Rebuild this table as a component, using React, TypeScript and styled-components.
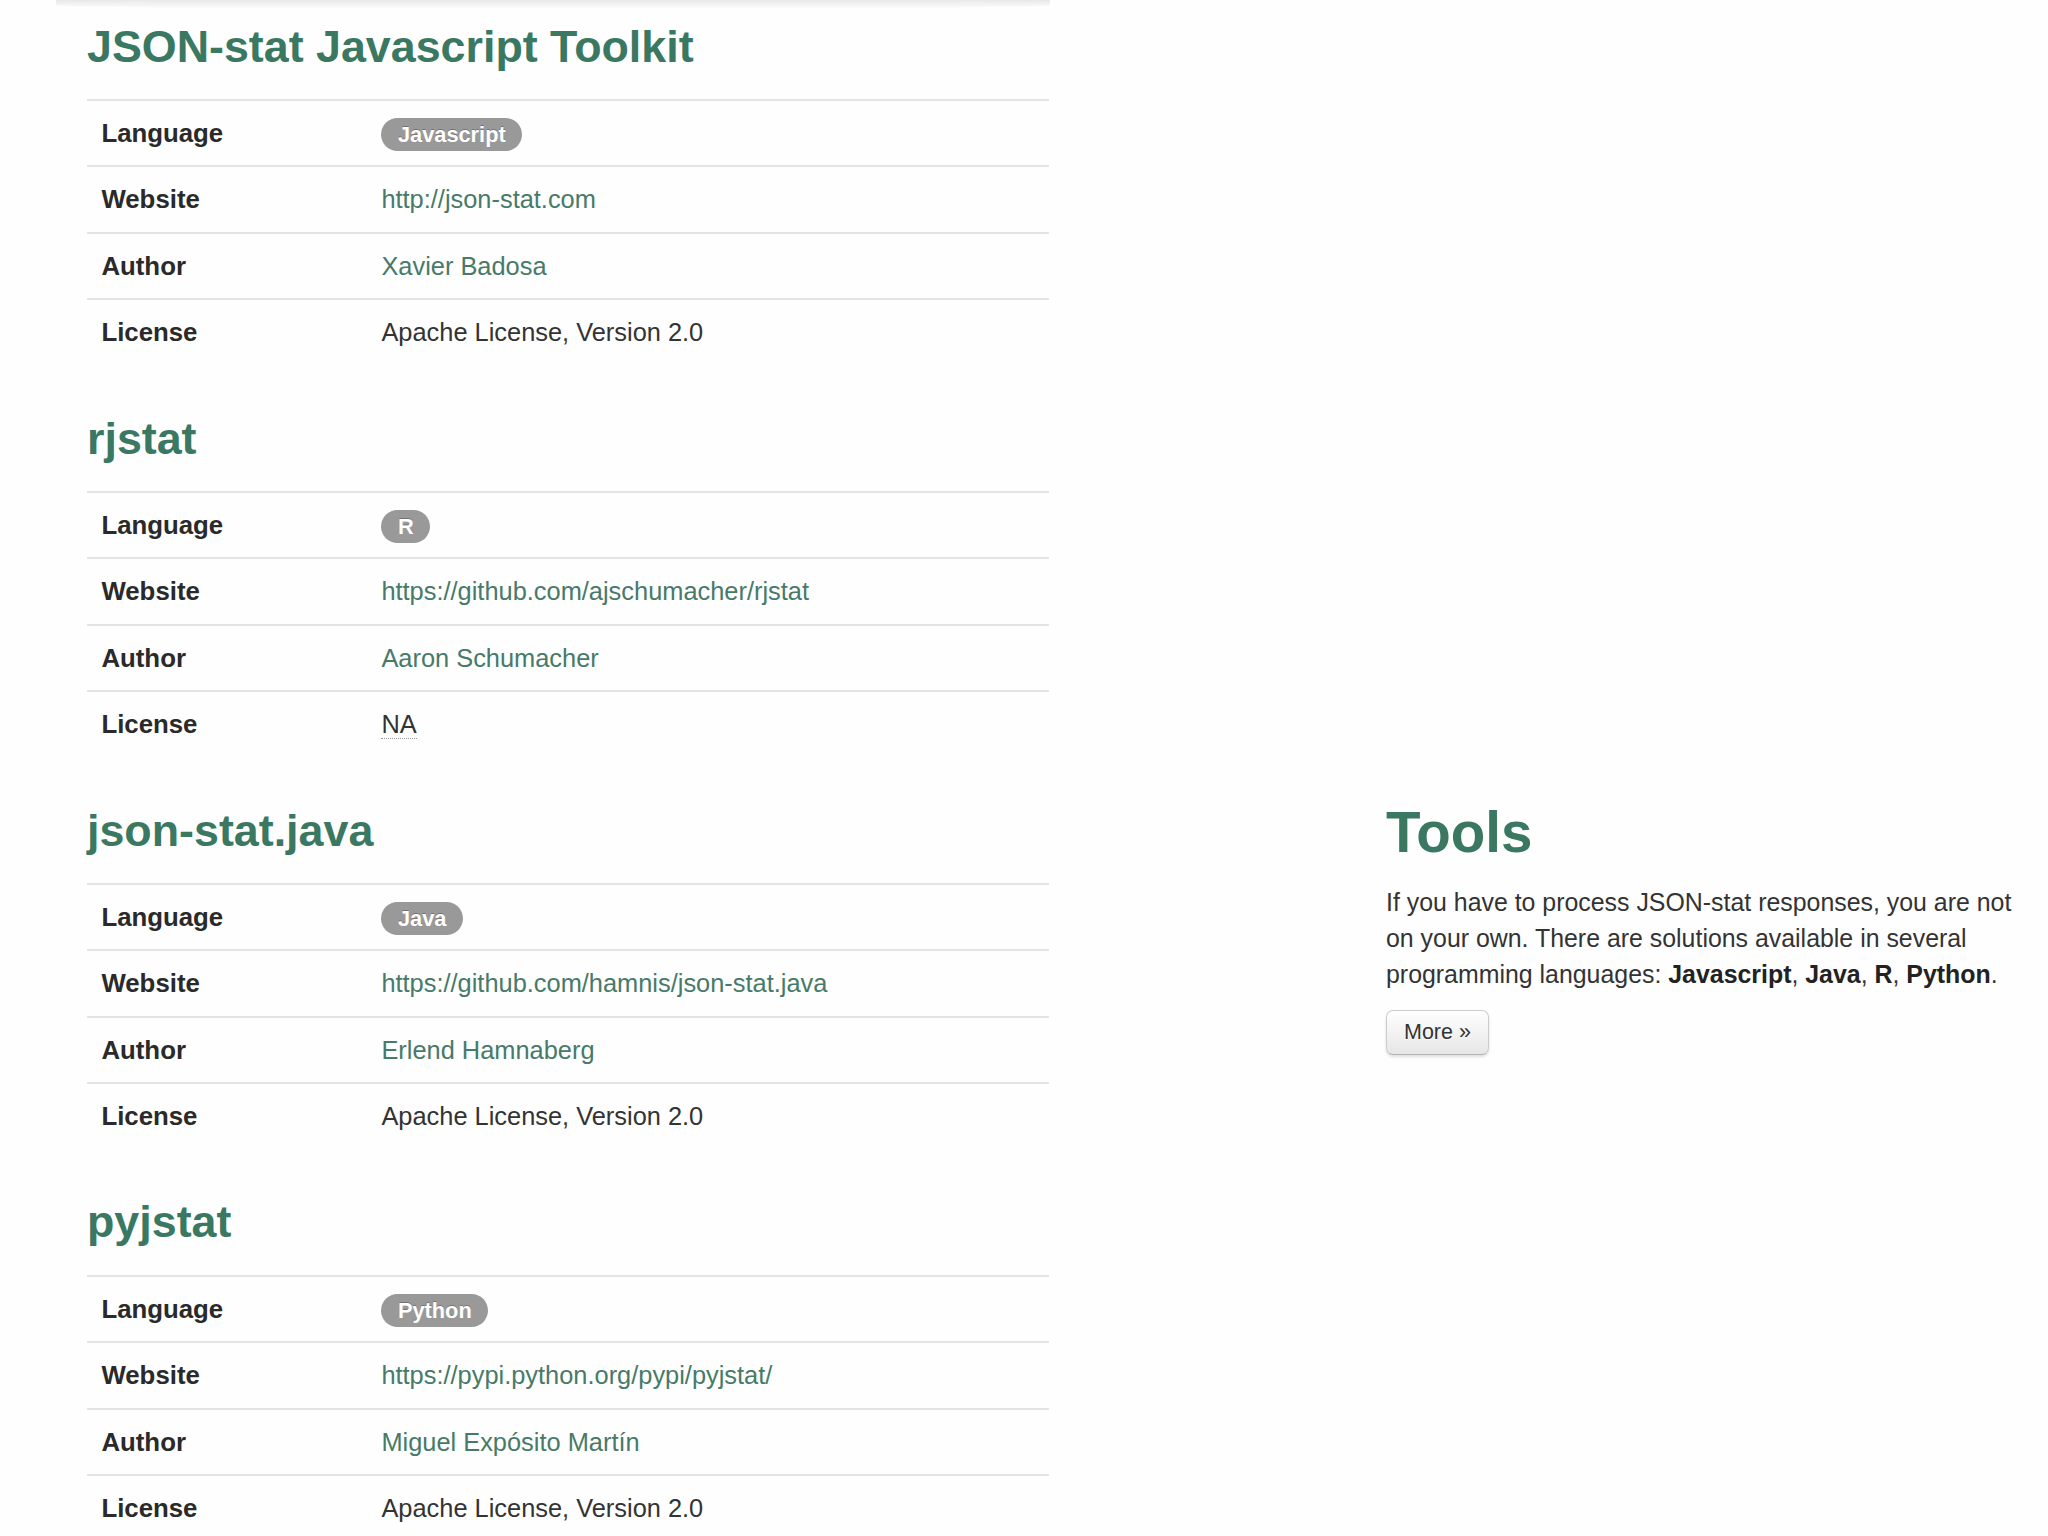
import React from "react";
import styled, { createGlobalStyle } from "styled-components";

const GlobalStyle = createGlobalStyle`
  html, body {
    margin: 0;
    padding: 0;
    background: #fefefe;
  }
  body {
    font-family: "Liberation Sans", Arial, Helvetica, sans-serif;
    color: #333;
    overflow: hidden;
  }
`;

const Page = styled.div`
  display: flex;
  align-items: flex-start;
  width: 2048px;
  height: 1536px;
  overflow: hidden;
`;

const MainColumn = styled.div`
  position: relative;
  box-sizing: border-box;
  width: 994px;
  margin-left: 56px;
  padding: 9.6px 0 0 31px;
`;

const TopShade = styled.div`
  position: absolute;
  left: 0;
  right: 0;
  top: 0;
  height: 9px;
  background: linear-gradient(to bottom, rgba(0, 0, 0, 0.085), rgba(0, 0, 0, 0));
  border-radius: 0 0 50% 50% / 0 0 4px 4px;
`;

const Section = styled.section`
  margin-bottom: 37px;
`;

const ToolTitle = styled.h3`
  margin: 0 0 17.4px;
  font-size: 44.8px;
  line-height: 72px;
  font-weight: bold;
  color: #3a7862;
`;

const Table = styled.div`
  width: 962px;
`;

const Row = styled.div`
  display: grid;
  grid-template-columns: 280px 1fr;
  border-top: 2px solid #e4e4e6;
  height: 66.4px;
  box-sizing: border-box;
`;

const Label = styled.div`
  padding: 0 14.4px;
  line-height: 64.4px;
  font-size: 25.8px;
  font-weight: bold;
  color: #2a2a2a;
  white-space: nowrap;
`;

const Value = styled.div`
  padding: 0 14.4px;
  line-height: 64.4px;
  font-size: 25.4px;
  color: #333;
  white-space: nowrap;
`;

const Link = styled.a`
  color: #477a69;
  text-decoration: none;
`;

const Badge = styled.span`
  display: inline-block;
  padding: 3.6px 16.5px;
  font-size: 21.8px;
  line-height: 25.2px;
  font-weight: bold;
  color: #fff;
  background: #999;
  border-radius: 17px;
  vertical-align: baseline;
  text-shadow: 0 -1px 0 rgba(0, 0, 0, 0.25);
`;

const Abbr = styled.abbr`
  text-decoration: none;
  border-bottom: 1px dotted #999;
  cursor: help;
`;

const SideColumn = styled.aside`
  width: 648px;
  margin-left: 336px;
  padding-top: 797px;
`;

const SideTitle = styled.h2`
  margin: 0 0 15px;
  font-size: 56.5px;
  line-height: 71.8px;
  font-weight: bold;
  color: #3a7862;
`;

const Paragraph = styled.p`
  margin: 0 0 18px;
  font-size: 24.9px;
  line-height: 36px;
  color: #333;
`;

const Strong = styled.strong`
  color: #222;
`;

const MoreButton = styled.button`
  box-sizing: border-box;
  height: 45px;
  padding: 0 17px;
  font-family: "Liberation Sans", Arial, sans-serif;
  font-size: 21.5px;
  line-height: 32px;
  color: #333;
  text-shadow: 0 1px 1px rgba(255, 255, 255, 0.75);
  background: linear-gradient(to bottom, #ffffff, #e6e6e6);
  border: 1px solid #cccccc;
  border-bottom-color: #b3b3b3;
  border-radius: 7px;
  box-shadow: inset 0 1px 0 rgba(255, 255, 255, 0.2), 0 2px 3px rgba(0, 0, 0, 0.12);
  cursor: pointer;
`;

type Tool = {
  name: string;
  language: string;
  website: string;
  author: string;
  license: string;
  licenseAbbr?: string;
};

const tools: Tool[] = [
  {
    name: "JSON-stat Javascript Toolkit",
    language: "Javascript",
    website: "http://json-stat.com",
    author: "Xavier Badosa",
    license: "Apache License, Version 2.0",
  },
  {
    name: "rjstat",
    language: "R",
    website: "https://github.com/ajschumacher/rjstat",
    author: "Aaron Schumacher",
    license: "NA",
    licenseAbbr: "Not available",
  },
  {
    name: "json-stat.java",
    language: "Java",
    website: "https://github.com/hamnis/json-stat.java",
    author: "Erlend Hamnaberg",
    license: "Apache License, Version 2.0",
  },
  {
    name: "pyjstat",
    language: "Python",
    website: "https://pypi.python.org/pypi/pyjstat/",
    author: "Miguel Expósito Martín",
    license: "Apache License, Version 2.0",
  },
];

function ToolSection({ tool }: { tool: Tool }) {
  return (
    <Section>
      <ToolTitle>{tool.name}</ToolTitle>
      <Table>
        <Row>
          <Label>Language</Label>
          <Value>
            <Badge>{tool.language}</Badge>
          </Value>
        </Row>
        <Row>
          <Label>Website</Label>
          <Value>
            <Link href={tool.website}>{tool.website}</Link>
          </Value>
        </Row>
        <Row>
          <Label>Author</Label>
          <Value>
            <Link href="#">{tool.author}</Link>
          </Value>
        </Row>
        <Row>
          <Label>License</Label>
          <Value>
            {tool.licenseAbbr ? (
              <Abbr title={tool.licenseAbbr}>{tool.license}</Abbr>
            ) : (
              tool.license
            )}
          </Value>
        </Row>
      </Table>
    </Section>
  );
}

export default function App() {
  return (
    <>
      <GlobalStyle />
      <Page>
        <MainColumn>
          <TopShade />
          {tools.map((t) => (
            <ToolSection key={t.name} tool={t} />
          ))}
        </MainColumn>
        <SideColumn>
          <SideTitle>Tools</SideTitle>
          <Paragraph>
            If you have to process JSON-stat responses, you are not on your own. There are
            solutions available in several programming languages: <Strong>Javascript</Strong>,{" "}
            <Strong>Java</Strong>, <Strong>R</Strong>, <Strong>Python</Strong>.
          </Paragraph>
          <MoreButton>More »</MoreButton>
        </SideColumn>
      </Page>
    </>
  );
}
